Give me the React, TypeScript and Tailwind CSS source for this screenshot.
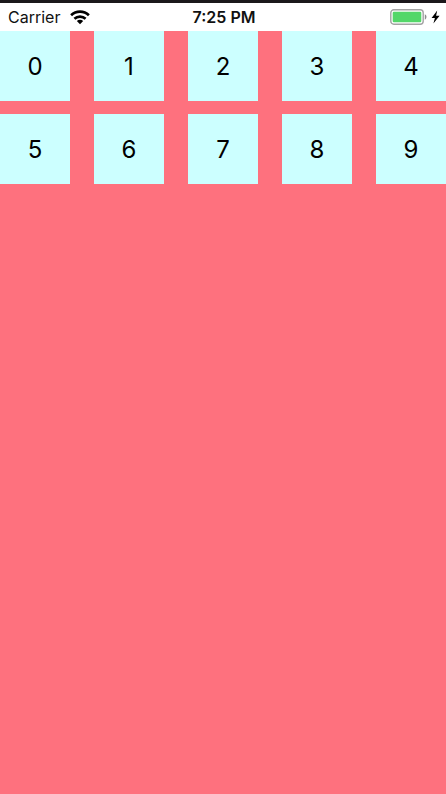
const items = Array.from({ length: 10 }, (_, i) => i)

function WifiIcon() {
  return (
    <svg viewBox="0 0 20 15" className="w-5 h-[15px]" fill="none" stroke="#000" strokeWidth="2.7" aria-hidden="true">
      <path d="M1.1 5.2C6.1 0.5 13.9 0.5 18.9 5.2" />
      <path d="M4.4 8.7C7.6 5.8 12.4 5.8 15.6 8.7" />
      <path d="M10 14.2L6.8 11C8.6 9.4 11.4 9.4 13.2 11Z" fill="#000" stroke="none" />
    </svg>
  )
}

function BatteryIcon() {
  return (
    <svg viewBox="0 0 37 16" className="w-[37px] h-4" aria-hidden="true">
      <rect x="0.8" y="0.8" width="32.4" height="14.4" rx="3" fill="#fff" stroke="#a3a3a3" strokeWidth="1.4" />
      <rect x="2.7" y="2.7" width="28.6" height="10.6" rx="1.2" fill="#53d769" />
      <path d="M34.8 5.3C37 6 37 10 34.8 10.7Z" fill="#8c8c8c" />
    </svg>
  )
}

function BoltIcon() {
  return (
    <svg viewBox="0 0 9 14" className="w-[9px] h-3.5" aria-hidden="true">
      <path d="M6.2 0.4L0.6 8H3.9L2.4 13.6L8.6 5.7H5.1Z" fill="#000" />
    </svg>
  )
}

function StatusBar() {
  return (
    <header className="grid grid-cols-[1fr_auto_1fr] items-center h-7 pl-2 pr-1.5 bg-white text-base leading-7 text-[#111]">
      <div className="flex items-center gap-2.5">
        <span>Carrier</span>
        <WifiIcon />
      </div>
      <time className="font-semibold">7:25 PM</time>
      <div className="flex items-center justify-end gap-1">
        <BatteryIcon />
        <BoltIcon />
      </div>
    </header>
  )
}

export default function App() {
  return (
    <div className="min-h-screen bg-[#fe717e] border-t-3 border-[#1b181b] font-['Inter',sans-serif]">
      <StatusBar />

      {/* Grid of square cells */}
      <main className="grid grid-cols-5 gap-x-6 gap-y-[13px]">
        {items.map((item) => (
          <div
            key={item}
            className="aspect-square flex items-center justify-center pt-0.5 bg-[#ccffff] text-2xl text-black"
          >
            {item}
          </div>
        ))}
      </main>
    </div>
  )
}
